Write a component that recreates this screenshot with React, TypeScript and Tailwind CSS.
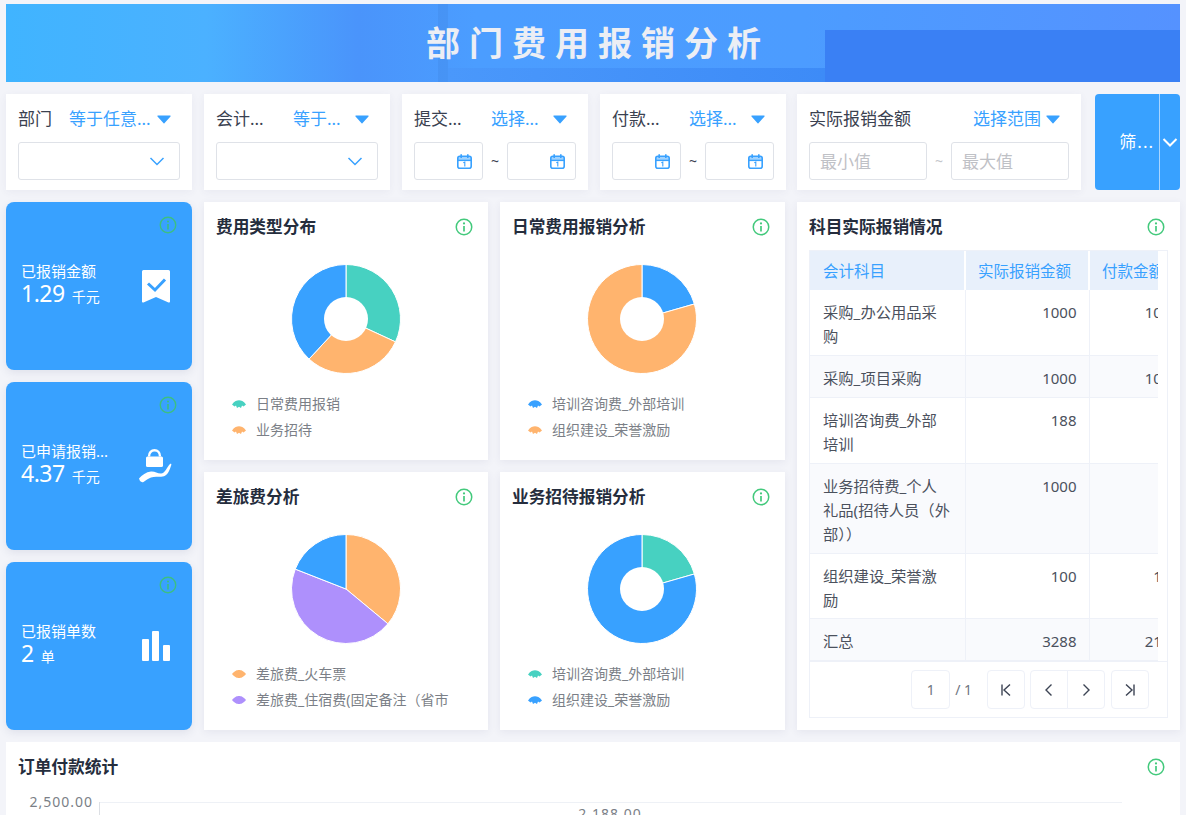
const BLUE = "#38a1ff";

const pieColors = { teal: "#47d1c1", orange: "#ffb46e", purple: "#ae90fc", blue: "#38a1ff" };

type Slice = { color: string; from: number; to: number };

function slicePath(from: number, to: number) {
  const r = 54.5;
  const a = (from * Math.PI) / 180;
  const b = (to * Math.PI) / 180;
  const large = to - from > 180 ? 1 : 0;
  return `M55 55 L${55 + r * Math.sin(a)} ${55 - r * Math.cos(a)} A${r} ${r} 0 ${large} 1 ${55 + r * Math.sin(b)} ${55 - r * Math.cos(b)} Z`;
}

function Pie({ slices, hole }: { slices: Slice[]; hole?: boolean }) {
  return (
    <svg width="110" height="110" viewBox="0 0 110 110">
      {slices.map((s) => (
        <path key={s.from} d={slicePath(s.from, s.to)} fill={s.color} stroke="#fff" strokeWidth="1" />
      ))}
      {hole && <circle cx="55" cy="55" r="22" fill="#fff" />}
    </svg>
  );
}

function InfoIcon() {
  return (
    <svg width="18" height="18" viewBox="0 0 18 18" fill="none">
      <circle cx="9" cy="9" r="7.75" stroke="#43c97c" strokeWidth="1.5" />
      <circle cx="9" cy="5.4" r="1.1" fill="#43c97c" />
      <path d="M9 8v5.4" stroke="#43c97c" strokeWidth="1.7" />
    </svg>
  );
}

function Caret() {
  return (
    <svg width="14" height="9" viewBox="0 0 14 9" className="shrink-0">
      <path d="M1 .5h12a.6.6 0 0 1 .5 1L7.4 8.2a.6.6 0 0 1-.8 0L.5 1.500A.6.6 0 0 1 1 .5z" fill={BLUE} />
    </svg>
  );
}

function Chevron({ color = BLUE, width = "1.5" }: { color?: string; width?: string }) {
  return (
    <svg width="16" height="9" viewBox="0 0 16 9" fill="none">
      <path d="M1.500 1l6.500 6.500L14.500 1" stroke={color} strokeWidth={width} />
    </svg>
  );
}

function CalendarIcon() {
  return (
    <svg width="15" height="15" viewBox="0 0 15 15" fill="none">
      <path d="M1 6V4a1.800 1.800 0 0 1 1.800-1.800h9.400A1.800 1.800 0 0 1 14 4v2z" fill="#9fd2ff" />
      <rect x=".8" y="2.200" width="13.400" height="12" rx="2" stroke={BLUE} strokeWidth="1.600" />
      <path d="M.8 6.400h13.400" stroke={BLUE} strokeWidth="1.400" />
      <path d="M4.200 .3v3.700M10.800 .3v3.700" stroke={BLUE} strokeWidth="1.600" />
      <path d="M6.300 8.700l1.500-.7v4.400" stroke={BLUE} strokeWidth="1.100" />
    </svg>
  );
}

function LegendMark({ color, fan }: { color: string; fan?: boolean }) {
  return (
    <svg width="14" height="8" viewBox="0 0 14 8" className="shrink-0">
      {fan ? (
        <path d="M0 4.500C2.500 1 5 .3 7 .3s4.500.7 7 4.200L11.500 6.500l-1.500-1L9 8 7 6.800 5 8 4 5.500l-1.500 1z" fill={color} />
      ) : (
        <path d="M0 4C3 .6 5 0 7 0s4 .6 7 4c-3 3.400-5 4-7 4S3 7.400 0 4z" fill={color} />
      )}
    </svg>
  );
}

function FilterCard({ label, value, width, valueWidth, children }: {
  label: string;
  value: string;
  width: string;
  valueWidth: string;
  children: React.ReactNode;
}) {
  return (
    <div className={`${width} h-[96px] shrink-0 bg-white px-3 pt-3 shadow-[0_2px_8px_rgba(60,70,120,0.06)]`}>
      <div className="flex h-[26px] items-center pr-[9px] text-[17px]">
        <span className="whitespace-nowrap text-[#3a4150]">{label}</span>
        <span className={`ml-auto whitespace-nowrap text-[#38a1ff] ${valueWidth}`}>{value}</span>
        <Caret />
      </div>
      <div className="mt-[10px]">{children}</div>
    </div>
  );
}

function SelectBox() {
  return (
    <div className="flex h-[38px] items-center justify-end rounded-[3px] border border-[#dfe2e8] pr-[14px]">
      <Chevron />
    </div>
  );
}

function DateRange() {
  return (
    <div className="flex items-center justify-between">
      <div className="flex h-[38px] w-[69px] items-center justify-end rounded-[3px] border border-[#dfe2e8] pr-[10px]">
        <CalendarIcon />
      </div>
      <span className="text-sm text-[#3a4150]">~</span>
      <div className="flex h-[38px] w-[69px] items-center justify-end rounded-[3px] border border-[#dfe2e8] pr-[10px]">
        <CalendarIcon />
      </div>
    </div>
  );
}

function StatCard({ label, value, unit, children }: { label: string; value: string; unit: string; children: React.ReactNode }) {
  return (
    <div className="relative flex h-[168px] items-center justify-between rounded-lg bg-[#38a1ff] pl-[15px] pr-[22px] shadow-[0_3px_8px_rgba(60,70,120,0.1)]">
      <div className="absolute right-[15px] top-[14px]">
        <svg width="18" height="18" viewBox="0 0 18 18" fill="none">
          <circle cx="9" cy="9" r="7.750" stroke="#3cbf83" strokeWidth="1.400" />
          <circle cx="9" cy="5.400" r="1" fill="#3cbf83" />
          <path d="M9 8v5.400" stroke="#3cbf83" strokeWidth="1.600" />
        </svg>
      </div>
      <div className="-mt-[3px] text-white">
        <div className="text-[15px] leading-[20px]">{label}</div>
        <div className="flex items-baseline leading-[24px]">
          <span className="text-[23px] tracking-[-0.5px]">{value}</span>
          <span className="ml-[7px] text-[14px]">{unit}</span>
        </div>
      </div>
      {children}
    </div>
  );
}

function PieCard({ title, slices, hole, legend, fan }: {
  title: string;
  slices: Slice[];
  hole?: boolean;
  legend: { color: string; text: string }[];
  fan?: boolean;
}) {
  return (
    <div className="h-[258px] overflow-hidden bg-white shadow-[0_2px_8px_rgba(60,70,120,0.08)]">
      <CardHeader title={title} />
      <div className="mt-3 flex pl-[87px]">
        <Pie slices={slices} hole={hole} />
      </div>
      <div className="mt-[17px] pl-7">
        {legend.map((l) => (
          <div key={l.text} className="flex h-[26px] items-center gap-[10px] text-sm text-[#7b7f87]">
            <LegendMark color={l.color} fan={fan} />
            <span className="whitespace-nowrap">{l.text}</span>
          </div>
        ))}
      </div>
    </div>
  );
}

function CardHeader({ title }: { title: string }) {
  return (
    <div className="flex h-[50px] items-center justify-between pl-3 pr-[15px]">
      <h3 className="text-[16.700px] font-bold text-[#252d3d]">{title}</h3>
      <InfoIcon />
    </div>
  );
}

const rows = [
  { name: "采购_办公用品采购", a: "1000", b: "1000", pb: "pb-[7px]" },
  { name: "采购_项目采购", a: "1000", b: "1000", pb: "pb-[7px]" },
  { name: "培训咨询费_外部培训", a: "188", b: "", pb: "pb-[7px]" },
  { name: "业务招待费_个人礼品(招待人员（外部））", a: "1000", b: "", pb: "pb-[7px]" },
  { name: "组织建设_荣誉激励", a: "100", b: "100", pb: "pb-[6px]" },
  { name: "汇总", a: "3288", b: "2188", pb: "pb-[7px]" },
];

function DataTable() {
  return (
    <div className="mx-3 -mt-[2px] h-[468px] border border-[#eef1f8]">
      <div className="h-[410px] w-[348px] overflow-hidden">
        <table className="w-[400px] table-fixed border-collapse text-[15.300px] leading-6">
          <colgroup>
            <col className="w-[155px]" />
            <col className="w-[124px]" />
            <col className="w-[121px]" />
          </colgroup>
          <thead>
            <tr className="h-[39px] bg-[#e8f0fb] text-[15.500px] text-[#38a1ff]">
              <th className="border-r-2 border-white pl-[13px] text-left font-normal">会计科目</th>
              <th className="border-r-2 border-white pl-3 text-left font-normal">实际报销金额</th>
              <th className="pl-3 text-left font-normal whitespace-nowrap">付款金额</th>
            </tr>
          </thead>
          <tbody>
            {rows.map((r, i) => (
              <tr key={r.name} className={`border-b border-[#eef1f8] text-[#4b515d] ${i % 2 === 1 ? "bg-[#f9fafd]" : "bg-white"}`}>
                <td className={`border-r border-[#eef1f8] pl-[13px] pr-[14px] pt-[10px] align-top ${r.pb}`}>{r.name}</td>
                <td className={`border-r border-[#eef1f8] pr-[12px] pt-[10px] text-right align-top text-[15px] ${r.pb}`}>{r.a}</td>
                <td className={`pr-[31px] pt-[10px] text-right align-top text-[15px] ${r.pb}`}>{r.b}</td>
              </tr>
            ))}
          </tbody>
        </table>
      </div>
      <div className="flex h-[56px] items-center justify-end border-t border-[#eef1f8] pr-[18px] text-sm text-[#6f7580]">
        <div className="flex h-[39px] w-[39px] items-center justify-center rounded-[4px] border border-[#eef1f8]">1</div>
        <span className="ml-[5px] mr-[15px]">/ 1</span>
        <PageButton className="rounded-[4px]" d="M3 1.500v11M11 1.500L5 7l6 5.500" />
        <PageButton className="ml-[5px] rounded-l-[4px]" d="M9.500 1.500L4 7l5.500 5.500" />
        <PageButton className="-ml-px rounded-r-[4px]" d="M4.500 1.500L10 7l-5.500 5.500" />
        <PageButton className="ml-[6px] rounded-[4px]" d="M3 1.500L9 7l-6 5.500M11 1.500v11" />
      </div>
    </div>
  );
}

function PageButton({ d, className }: { d: string; className: string }) {
  return (
    <div className={`flex h-[39px] w-[38px] items-center justify-center border border-[#eef1f8] ${className}`}>
      <svg width="14" height="14" viewBox="0 0 14 14" fill="none">
        <path d={d} stroke="#3d4454" strokeWidth="1.400" />
      </svg>
    </div>
  );
}

export default function App() {
  return (
    <div className="h-[815px] overflow-hidden bg-[#f3f4f9] px-[6px] pt-1 font-['Noto_Sans','Noto_Sans_CJK_SC',sans-serif]">
      {/* banner */}
      <div className="relative h-[78px] overflow-hidden bg-[linear-gradient(90deg,#40b4ff_0%,#4bb1ff_17%,#4a94fb_30%,#4b9dff_40%,#4c9cff_68%,#5592ff_100%)]">
        <div className="absolute inset-y-0 left-[432px] w-[10px] bg-[#4590ee]/60" />
        <div className="absolute bottom-0 left-[442px] h-[14px] w-[378px] bg-linear-to-r from-[#4a98fb] to-[#3d8bf7]" />
        <div className="absolute bottom-0 left-[819px] right-0 top-[26px] bg-[#3a80f4]" />
        <h1 className="relative flex h-full items-center justify-center pl-[13px] pr-[3px] text-[34px] font-bold tracking-[9px] text-[#eceef4]">
          部门费用报销分析
        </h1>
      </div>

      {/* filters */}
      <div className="mt-3 flex">
        <FilterCard label="部门" value="等于任意..." valueWidth="w-[88px]" width="w-[186px]"><SelectBox /></FilterCard>
        <div className="w-3" />
        <FilterCard label="会计..." value="等于..." valueWidth="w-[62px]" width="w-[186px]"><SelectBox /></FilterCard>
        <div className="w-3" />
        <FilterCard label="提交..." value="选择..." valueWidth="w-[62px]" width="w-[186px]"><DateRange /></FilterCard>
        <div className="w-3" />
        <FilterCard label="付款..." value="选择..." valueWidth="w-[62px]" width="w-[186px]"><DateRange /></FilterCard>
        <div className="w-[11px]" />
        <FilterCard label="实际报销金额" value="选择范围" valueWidth="w-[73px]" width="w-[284px]">
          <div className="flex items-center justify-between text-[17px]">
            <div className="flex h-[38px] w-[118px] items-center rounded-[3px] border border-[#dfe2e8] pl-[10px] pt-px text-[#bfc1c6]">最小值</div>
            <span className="text-sm text-[#c4c6cb]">~</span>
            <div className="flex h-[38px] w-[118px] items-center rounded-[3px] border border-[#dfe2e8] pl-[10px] pt-px text-[#bfc1c6]">最大值</div>
          </div>
        </FilterCard>
        <div className="ml-[14px] flex h-[96px] w-[85px] rounded bg-[#38a1ff] text-[17px] text-white">
          <div className="flex w-[64px] items-center justify-end pr-[5px] tracking-[1px]">筛...</div>
          <div className="flex flex-1 items-center justify-center border-l border-[#a9d5ff]">
            <Chevron color="#fff" width="2" />
          </div>
        </div>
      </div>

      {/* main */}
      <div className="mt-3 grid grid-cols-[186px_284px_285px_383px] gap-x-3">
        <div className="flex flex-col gap-3">
          <StatCard label="已报销金额" value="1.29" unit="千元">
            <svg width="28" height="33" viewBox="0 0 28 33">
              <path d="M1.500 0h25A1.500 1.500 0 0 1 28 1.500v30a1 1 0 0 1-1.500.9L14 27 1.500 32.400A1 1 0 0 1 0 31.500v-30A1.500 1.500 0 0 1 1.500 0z" fill="#fff" />
              <path d="M6 13.500l7 6.500L23 9.500" fill="none" stroke={BLUE} strokeWidth="3" />
            </svg>
          </StatCard>
          <StatCard label="已申请报销..." value="4.37" unit="千元">
            <svg width="33" height="34" viewBox="0 0 33 34" className="mr-[-2px]">
              <path d="M10 7.500C10 3.500 12.500 1.300 15.500 1.300S21 3.500 21 7.500" fill="none" stroke="#fff" strokeWidth="2.400" />
              <rect x="7" y="7.500" width="17" height="10.500" rx="1.500" fill="#fff" />
              <path d="M0 29.500C3 26 7 23 12 22.500C16 22.200 18 24.500 22 24.500C26 24.500 28 18 31 15C32 14.300 32.500 15 32.300 16C31 20 29 26 25 27.200C20 28.500 16 27 12 28.500C9 29.500 7 31.500 4.500 33C3 33.500 2 33 1 32Z" fill="#fff" />
            </svg>
          </StatCard>
          <StatCard label="已报销单数" value="2" unit="单">
            <svg width="28" height="30" viewBox="0 0 28 30">
              <rect x="0" y="8" width="7" height="22" rx="1" fill="#fff" />
              <rect x="10" y="0" width="7" height="30" rx="1" fill="#fff" />
              <rect x="21" y="14" width="7" height="16" rx="1" fill="#fff" />
            </svg>
          </StatCard>
        </div>

        <div className="col-span-2 grid grid-cols-[284px_285px] gap-x-3 gap-y-3">
          <PieCard
            title="费用类型分布"
            hole
            fan
            slices={[
              { color: pieColors.teal, from: 0, to: 114.800 },
              { color: pieColors.orange, from: 114.800, to: 222.700 },
              { color: pieColors.blue, from: 222.700, to: 360 },
            ]}
            legend={[
              { color: pieColors.teal, text: "日常费用报销" },
              { color: pieColors.orange, text: "业务招待" },
            ]}
          />
          <PieCard
            title="日常费用报销分析"
            hole
            fan
            slices={[
              { color: pieColors.blue, from: 0, to: 74 },
              { color: pieColors.orange, from: 74, to: 360 },
            ]}
            legend={[
              { color: pieColors.blue, text: "培训咨询费_外部培训" },
              { color: pieColors.orange, text: "组织建设_荣誉激励" },
            ]}
          />
          <PieCard
            title="差旅费分析"
            slices={[
              { color: pieColors.orange, from: 0, to: 129.700 },
              { color: pieColors.purple, from: 129.700, to: 291.400 },
              { color: pieColors.blue, from: 291.400, to: 360 },
            ]}
            legend={[
              { color: pieColors.orange, text: "差旅费_火车票" },
              { color: pieColors.purple, text: "差旅费_住宿费(固定备注（省市" },
            ]}
          />
          <PieCard
            title="业务招待报销分析"
            hole
            fan
            slices={[
              { color: pieColors.teal, from: 0, to: 74 },
              { color: pieColors.blue, from: 74, to: 360 },
            ]}
            legend={[
              { color: pieColors.teal, text: "培训咨询费_外部培训" },
              { color: pieColors.blue, text: "组织建设_荣誉激励" },
            ]}
          />
        </div>

        <div className="h-[528px] bg-white shadow-[0_2px_8px_rgba(60,70,120,0.08)]">
          <CardHeader title="科目实际报销情况" />
          <DataTable />
        </div>
      </div>

      {/* order chart */}
      <div className="mt-3 h-[200px] bg-white">
        <CardHeader title="订单付款统计" />
        <svg width="1174" height="60" viewBox="0 0 1174 60" className="block">
          <text x="87" y="15" textAnchor="end" fontSize="14" letterSpacing="1" fill="#7b7f87">2,500.00</text>
          <path d="M93 10.500H1116" stroke="#eef1f6" />
          <path d="M93.500 10v50" stroke="#dcdfe4" />
          <text x="604" y="27" textAnchor="middle" fontSize="14" letterSpacing="1" fill="#7b7f87">2,188.00</text>
        </svg>
      </div>
    </div>
  );
}
